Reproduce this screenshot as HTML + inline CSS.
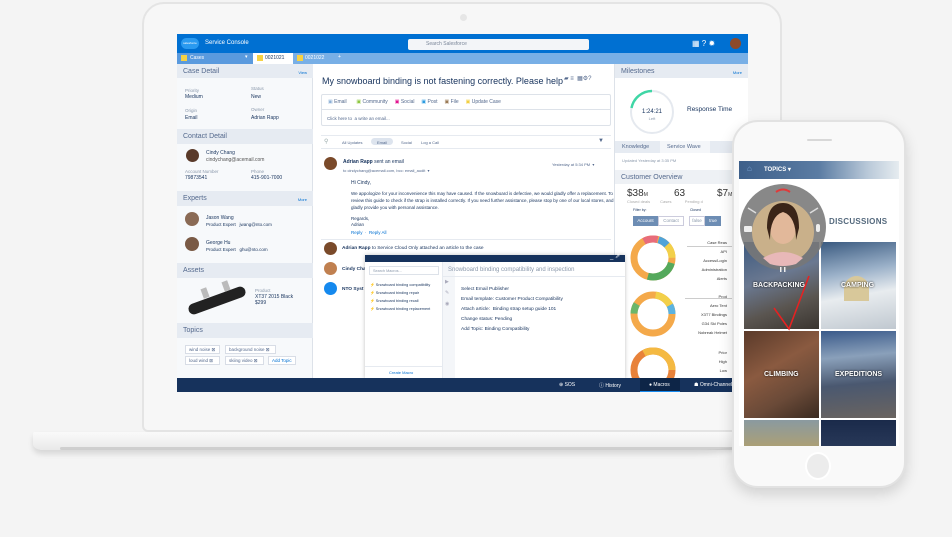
<!DOCTYPE html>
<html><head><meta charset="utf-8"><style>
*{margin:0;padding:0;box-sizing:border-box}
body{width:952px;height:537px;overflow:hidden;background:#f4f4f4;font-family:"Liberation Sans",sans-serif;position:relative;color:#16325c}
.a{position:absolute}
.t{position:absolute;white-space:nowrap}
.hd{position:absolute;background:#e6ebf2;color:#54698d;font-size:7px;padding:4px 6px}
.lbl{color:#8a98ab;font-size:4.5px}
.val{color:#16325c;font-size:5px}
.tag{position:absolute;height:9px;border:1px solid #d8dde6;background:#fff;font-size:4.5px;padding:1px 3px;white-space:nowrap;color:#54698d}
</style></head><body>
<div class="a" style="left:33px;top:432px;width:720px;height:18px;background:linear-gradient(#fafafa,#e9e9e9);border-radius:2px 2px 60px 10px/2px 2px 12px 6px;box-shadow:0 4px 6px rgba(0,0,0,.12)"></div>
<div class="a" style="left:60px;top:447px;width:680px;height:3px;background:#bdbdbd;border-radius:2px;opacity:.6"></div>
<div class="a" style="left:142px;top:2px;width:640px;height:430px;background:#f7f7f7;border:2px solid #e4e4e4;border-radius:22px 22px 6px 6px"></div>
<div class="a" style="left:460px;top:14px;width:7px;height:7px;border-radius:50%;background:#e6e6e6"></div>
<div class="a" style="left:177px;top:34px;width:571px;height:358px;background:#fff;overflow:hidden">
 <div class="a" style="left:0;top:0;width:571px;height:19px;background:#0070d2"></div>
 <div class="a" style="left:4px;top:4px;width:18px;height:11px;border-radius:6px;background:#2a9af0;color:#fff;font-size:3px;text-align:center;line-height:11px">salesforce</div>
 <div class="t" style="left:28px;top:6px;color:#fff;font-size:6px">Service Console</div>
 <div class="a" style="left:231px;top:5px;width:181px;height:11px;background:#f3f5f8;border-radius:2px"></div>
 <div class="t" style="left:249px;top:7px;color:#7a8699;font-size:5px">Search Salesforce</div>
 <div class="t" style="left:515px;top:5px;color:#fff;font-size:8px">▦ ? ✹</div>
 <div class="a" style="left:553px;top:4px;width:11px;height:11px;border-radius:50%;background:#8d4a2a"></div>
 <div class="a" style="left:0;top:19px;width:571px;height:11px;background:#78afe6"></div>
 <div class="a" style="left:0;top:19px;width:76px;height:11px;background:#5a9ade"></div>
 <div class="a" style="left:4px;top:21px;width:6px;height:6px;background:#f6d244"></div>
 <div class="t" style="left:13px;top:21px;color:#fff;font-size:5px">Cases</div>
 <div class="t" style="left:68px;top:20px;color:#fff;font-size:5px">▾</div>
 <div class="a" style="left:76px;top:19px;width:40px;height:11px;background:#fff"></div>
 <div class="a" style="left:80px;top:21px;width:6px;height:6px;background:#f6d244"></div>
 <div class="t" style="left:88px;top:21px;font-size:5px">0021021</div>
 <div class="a" style="left:120px;top:21px;width:6px;height:6px;background:#f6d244"></div>
 <div class="t" style="left:128px;top:21px;color:#fff;font-size:5px">0021022</div>
 <div class="t" style="left:161px;top:20px;color:#fff;font-size:5px">+</div>
 <div class="a" style="left:0;top:30px;width:136px;height:314px;background:#f7f9fb;border-right:1px solid #dde2e9"></div>
 <div class="hd" style="left:0;top:30px;width:136px;height:14px">Case Detail<span style="float:right;font-size:4px;color:#0070d2;margin-top:2px">View</span></div>
 <div class="t lbl" style="left:8px;top:54px">Priority</div><div class="t val" style="left:8px;top:60px">Medium</div>
 <div class="t lbl" style="left:74px;top:52px">Status</div><div class="t val" style="left:74px;top:60px">New</div>
 <div class="t lbl" style="left:8px;top:74px">Origin</div><div class="t val" style="left:8px;top:81px">Email</div>
 <div class="t lbl" style="left:74px;top:73px">Owner</div><div class="t val" style="left:74px;top:81px">Adrian Rapp</div>
 <div class="hd" style="left:0;top:95px;width:136px;height:15px">Contact Detail</div>
 <div class="a" style="left:9px;top:115px;width:13px;height:13px;border-radius:50%;background:#5a3a2a"></div>
 <div class="t val" style="left:29px;top:116px">Cindy Chang</div>
 <div class="t val" style="left:29px;top:123px;color:#555">cindychang@acemail.com</div>
 <div class="t lbl" style="left:8px;top:135px">Account Number</div><div class="t val" style="left:8px;top:141px">79873541</div>
 <div class="t lbl" style="left:74px;top:135px">Phone</div><div class="t val" style="left:74px;top:141px">415-901-7000</div>
 <div class="hd" style="left:0;top:157px;width:136px;height:15px">Experts<span style="float:right;font-size:4px;color:#0070d2;margin-top:2px">More</span></div>
 <div class="a" style="left:8px;top:178px;width:14px;height:14px;border-radius:50%;background:#8a6a55"></div>
 <div class="t val" style="left:29px;top:181px">Jason Wang</div>
 <div class="t val" style="left:29px;top:188px;font-size:4.5px">Product Expert &nbsp;&nbsp;jwang@nto.com</div>
 <div class="a" style="left:8px;top:203px;width:14px;height:14px;border-radius:50%;background:#7a5a45"></div>
 <div class="t val" style="left:29px;top:206px">George Hu</div>
 <div class="t val" style="left:29px;top:213px;font-size:4.5px">Product Expert &nbsp;&nbsp;ghu@nto.com</div>
 <div class="hd" style="left:0;top:229px;width:136px;height:15px">Assets</div>
 <div class="a" style="left:10px;top:261px;width:60px;height:11px;border-radius:6px;background:#222;transform:rotate(-20deg)"></div>
 <div class="a" style="left:25px;top:254px;width:6px;height:10px;background:#bbb;transform:rotate(-20deg)"></div>
 <div class="a" style="left:46px;top:247px;width:6px;height:10px;background:#bbb;transform:rotate(-20deg)"></div>
 <div class="t lbl" style="left:78px;top:254px">Product</div>
 <div class="t val" style="left:78px;top:260px;line-height:6px">XT37 2015 Black<br>$299</div>
 <div class="hd" style="left:0;top:289px;width:136px;height:15px">Topics</div>
 <div class="tag" style="left:8px;top:311px;width:35px">wind noise ⊠</div>
 <div class="tag" style="left:48px;top:311px;width:51px">background noise ⊠</div>
 <div class="tag" style="left:8px;top:322px;width:35px">loud wind ⊠</div>
 <div class="tag" style="left:48px;top:322px;width:39px">skiing video ⊠</div>
 <div class="tag" style="left:91px;top:322px;width:28px;color:#0070d2">Add Topic</div>
 <div class="t" style="left:145px;top:42px;font-size:9px;color:#16325c">My snowboard binding is not fastening correctly. Please help</div>
 <div class="t" style="left:387px;top:41px;font-size:6px;color:#54698d">▰ ≡ &nbsp;▦⚙?</div>
 <div class="a" style="left:144px;top:60px;width:290px;height:32px;border:1px solid #dde2e9;border-radius:2px"></div>
 <div class="a" style="left:144px;top:75px;width:290px;height:1px;background:#dde2e9"></div>
 <div class="t" style="left:151px;top:65px;font-size:5px;color:#54698d"><span style="color:#8db0d6">▣</span> Email &nbsp;&nbsp;&nbsp;&nbsp;&nbsp; <span style="color:#8dc63f">▣</span> Community &nbsp;&nbsp;&nbsp; <span style="color:#e2138f">▣</span> Social &nbsp;&nbsp;&nbsp; <span style="color:#2a9ae0">▣</span> Post &nbsp;&nbsp;&nbsp; <span style="color:#9a7a55">▣</span> File &nbsp;&nbsp;&nbsp; <span style="color:#f2cf40">▣</span> Update Case</div>
 <div class="t" style="left:150px;top:82px;font-size:4.5px;color:#54698d">Click here to &nbsp;a write an email...</div>
 <div class="a" style="left:144px;top:101px;width:290px;height:1px;background:#e6eaf0"></div>
 <div class="t" style="left:147px;top:104px;font-size:6px;color:#9aa">⚲</div>
 <div class="t" style="left:165px;top:106px;font-size:4px;color:#54698d">All Updates</div>
 <div class="a" style="left:194px;top:104px;width:22px;height:7px;border-radius:4px;background:#dde4ee"></div>
 <div class="t" style="left:200px;top:106px;font-size:4px;color:#54698d">Email</div>
 <div class="t" style="left:224px;top:106px;font-size:4px;color:#54698d">Social</div>
 <div class="t" style="left:244px;top:106px;font-size:4px;color:#54698d">Log a Call</div>
 <div class="t" style="left:421px;top:104px;font-size:6px;color:#54698d">▼</div>
 <div class="a" style="left:144px;top:114px;width:290px;height:1px;background:#e6eaf0"></div>
 <div class="a" style="left:147px;top:123px;width:13px;height:13px;border-radius:50%;background:#7a4a2a"></div>
 <div class="t" style="left:166px;top:125px;font-size:5px"><b>Adrian Rapp</b> sent an email</div>
 <div class="t" style="left:166px;top:134px;font-size:4px;color:#54698d">to cindychang@acemail.com, bcc: email_audit &nbsp;▾</div>
 <div class="t" style="left:375px;top:128px;font-size:4px;color:#54698d">Yesterday at 5:34 PM &nbsp;▾</div>
 <div class="t" style="left:174px;top:146px;font-size:5px">Hi Cindy,</div>
 <div class="t" style="left:174px;top:156px;font-size:4.5px;line-height:7px">We appologize for your inconvenience this may have caused. If the snowboard is defective, we would gladly offer a replacement. To view<br>review this guide to check if the strap is installed correctly. If you need further assistance, please stop by one of our local stores, and a<br>gladly provide you with personal assistance.</div>
 <div class="t" style="left:174px;top:182px;font-size:4.5px;line-height:6px">Regards,<br>Adrian</div>
 <div class="t" style="left:174px;top:196px;font-size:4.5px;color:#0070d2">Reply &nbsp;· &nbsp;Reply All</div>
 <div class="a" style="left:144px;top:205px;width:290px;height:1px;background:#e6eaf0"></div>
 <div class="a" style="left:147px;top:208px;width:13px;height:13px;border-radius:50%;background:#7a4a2a"></div>
 <div class="t" style="left:165px;top:212px;font-size:4.8px"><b>Adrian Rapp</b> to Service Cloud Only attached an article to the case</div>
 <div class="a" style="left:147px;top:228px;width:13px;height:13px;border-radius:50%;background:#c08050"></div>
 <div class="t" style="left:165px;top:233px;font-size:4.8px"><b>Cindy Cha</b></div>
 <div class="a" style="left:147px;top:248px;width:13px;height:13px;border-radius:50%;background:#1589ee"></div>
 <div class="t" style="left:165px;top:253px;font-size:4.8px"><b>NTO Syst</b></div>
 <div class="a" style="left:437px;top:30px;width:134px;height:314px;background:#fff;border-left:1px solid #dde2e9"></div>
 <div class="hd" style="left:438px;top:30px;width:133px;height:14px">Milestones<span style="float:right;font-size:4px;color:#0070d2;margin-top:2px">More</span></div>
 <svg class="a" style="left:451px;top:54px" width="48" height="48"><circle cx="24" cy="24" r="21" fill="none" stroke="#e5e9ef" stroke-width="2"/><path d="M24 3 A21 21 0 0 0 3.5 20" fill="none" stroke="#3fd6a5" stroke-width="2.5"/><text x="24" y="25" font-size="6" text-anchor="middle" fill="#16325c" font-family="Liberation Sans">1:24:21</text><text x="24" y="32" font-size="4" text-anchor="middle" fill="#8a98ab" font-family="Liberation Sans">Left</text></svg>
 <div class="t" style="left:510px;top:72px;font-size:6.5px;color:#16325c">Response Time</div>
 <div class="a" style="left:438px;top:107px;width:133px;height:12px;background:#e6ebf2"></div>
 <div class="a" style="left:483px;top:107px;width:50px;height:12px;background:#f4f6f9"></div>
 <div class="t" style="left:445px;top:110px;font-size:5.5px;color:#54698d">Knowledge</div>
 <div class="t" style="left:490px;top:110px;font-size:5.5px;color:#54698d">Service Wave</div>
 <div class="t" style="left:445px;top:124px;font-size:4px;color:#8a98ab">Updated Yesterday at 3:35 PM</div>
 <div class="hd" style="left:438px;top:136px;width:133px;height:14px;background:#eef1f5;font-size:7px">Customer Overview</div>
 <div class="t" style="left:450px;top:154px;font-size:10px;color:#333">$38<span style="font-size:5px">M</span></div>
 <div class="t" style="left:497px;top:154px;font-size:10px;color:#333">63</div>
 <div class="t" style="left:540px;top:154px;font-size:10px;color:#333">$7<span style="font-size:5px">M</span></div>
 <div class="t" style="left:450px;top:165px;font-size:4px;color:#aaa">Closed deals &nbsp;&nbsp;&nbsp;&nbsp;&nbsp;&nbsp;&nbsp; Cases &nbsp;&nbsp;&nbsp;&nbsp;&nbsp;&nbsp;&nbsp;&nbsp;&nbsp;&nbsp; Pending d</div>
 <div class="t" style="left:456px;top:174px;font-size:3.5px">Filter by:</div>
 <div class="t" style="left:513px;top:174px;font-size:3.5px">Closed</div>
 <div class="a" style="left:456px;top:182px;width:25px;height:10px;background:#6d8db4;color:#fff;font-size:4.5px;text-align:center;line-height:10px">Account</div>
 <div class="a" style="left:481px;top:182px;width:26px;height:10px;border:1px solid #ccd;color:#8a98ab;font-size:4.5px;text-align:center;line-height:8px">Contact</div>
 <div class="a" style="left:512px;top:182px;width:16px;height:10px;border:1px solid #ccd;color:#8a98ab;font-size:4.5px;text-align:center;line-height:8px">false</div>
 <div class="a" style="left:528px;top:182px;width:16px;height:10px;background:#6d8db4;color:#fff;font-size:4.5px;text-align:center;line-height:10px">true</div>
 <svg class="a" style="left:452px;top:200px" width="50" height="150">
  <g fill="none" stroke-width="7">
   <circle cx="24" cy="24" r="19" stroke="#f4a94a"/>
   <circle cx="24" cy="24" r="19" stroke="#54a95c" stroke-dasharray="30 200" stroke-dashoffset="-5"/>
   <circle cx="24" cy="24" r="19" stroke="#e86c7a" stroke-dasharray="14 200" stroke-dashoffset="-80"/>
   <circle cx="24" cy="24" r="19" stroke="#4fa3d9" stroke-dasharray="10 200" stroke-dashoffset="-95"/>
   <circle cx="24" cy="24" r="19" stroke="#f2d04a" stroke-dasharray="14 200" stroke-dashoffset="-105"/>
   <circle cx="24" cy="80" r="19" stroke="#f4a94a"/>
   <circle cx="24" cy="80" r="19" stroke="#5cb3e0" stroke-dasharray="15 200" stroke-dashoffset="-110"/>
   <circle cx="24" cy="80" r="19" stroke="#f2d04a" stroke-dasharray="18 200" stroke-dashoffset="-92"/>
   <circle cx="24" cy="80" r="19" stroke="#6ab66a" stroke-dasharray="10 200" stroke-dashoffset="-60"/>
   <circle cx="24" cy="136" r="19" stroke="#e8823a"/>
   <circle cx="24" cy="136" r="19" stroke="#f4b942" stroke-dasharray="40 200" stroke-dashoffset="-80"/>
  </g></svg>
 <div class="t" style="left:506px;top:204px;font-size:4px;color:#333;text-align:right;line-height:9px;width:44px">Case Reas<br>API<br>Access/Login<br>Administration<br>Alerts</div>
 <div class="a" style="left:510px;top:212px;width:61px;height:1px;background:#ccc"></div>
 <div class="t" style="left:506px;top:258px;font-size:4px;color:#333;text-align:right;line-height:9px;width:44px">Prod<br>Aero Tent<br>X3T7 Bindings<br>G34 Ski Poles<br>Nobreak Helmet</div>
 <div class="a" style="left:508px;top:264px;width:63px;height:1px;background:#ccc"></div>
 <div class="t" style="left:506px;top:314px;font-size:4px;color:#333;text-align:right;line-height:9px;width:44px">Prior<br>High<br>Low</div>
 <div class="a" style="left:188px;top:221px;width:260px;height:124px;background:#fff;box-shadow:0 0 4px rgba(0,0,0,.25)"></div>
 <div class="a" style="left:188px;top:221px;width:260px;height:7px;background:#16325c"></div>
 <div class="t" style="left:433px;top:219px;font-size:6px;color:#fff">_ ⇗</div>
 <div class="a" style="left:188px;top:228px;width:78px;height:117px;background:#fff;border-right:1px solid #e6eaf0"></div>
 <div class="a" style="left:192px;top:232px;width:70px;height:9px;border:1px solid #dde2e9;font-size:3.8px;color:#8a98ab;padding:2px 3px">Search Macros...</div>
 <div class="t" style="left:193px;top:247px;font-size:3.8px;color:#16325c;line-height:8px">⚡ Snowboard binding compatibility<br>⚡ Snowboard binding repair<br>⚡ Snowboard binding recall<br>⚡ Snowboard binding replacement</div>
 <div class="a" style="left:188px;top:332px;width:78px;height:1px;background:#e6eaf0"></div>
 <div class="t" style="left:212px;top:336px;font-size:4px;color:#0070d2">Create Macro</div>
 <div class="a" style="left:266px;top:228px;width:12px;height:117px;background:#f4f6f9"></div>
 <div class="t" style="left:268px;top:243px;font-size:5px;color:#aab;line-height:11px">▶<br>✎<br>◉</div>
 <div class="t" style="left:271px;top:233px;font-size:6px;color:#8a98ab">Snowboard binding compatibility and inspection</div>
 <div class="a" style="left:266px;top:242px;width:182px;height:1px;background:#e6eaf0"></div>
 <div class="t" style="left:284px;top:251px;font-size:4.8px;color:#16325c;line-height:10px">Select Email Publisher<br>Email template: Customer Product Compatibility<br>Attach article: &nbsp;Binding strap setup guide 101<br>Change status: Pending<br>Add Topic: Binding Compatibility</div>
 <div class="a" style="left:0;top:344px;width:571px;height:14px;background:#16325c"></div>
 <div class="a" style="left:463px;top:344px;width:40px;height:14px;background:#0d2547;border-bottom:1px solid #1589ee"></div>
 <div class="t" style="left:382px;top:348px;font-size:5px;color:#fff">⊕ SOS</div>
 <div class="t" style="left:422px;top:348px;font-size:5px;color:#fff">ⓘ History</div>
 <div class="t" style="left:472px;top:348px;font-size:5px;color:#fff">● Macros</div>
 <div class="t" style="left:517px;top:348px;font-size:5px;color:#fff">☗ Omni-Channel</div>
</div>
<div class="a" style="left:732px;top:120px;width:174px;height:368px;background:#f9f9f9;border:2px solid #e2e2e2;border-radius:26px;box-shadow:0 6px 14px rgba(0,0,0,.15)"></div>
<div class="a" style="left:807px;top:139px;width:25px;height:2px;border-radius:1px;background:#d8d8d8"></div>
<div class="a" style="left:805px;top:452px;width:26px;height:28px;border-radius:50%;border:2px solid #fff;background:#ececec"></div>
<div class="a" style="left:739px;top:161px;width:160px;height:285px;background:#fff;overflow:hidden">
 <div class="a" style="left:0;top:0;width:160px;height:18px;background:linear-gradient(90deg,#3d5f8a,#5b7ca3 50%,#b8c8d8 80%,#e6ecf0)"></div>
 <div class="t" style="left:8px;top:3px;color:#7ea6d8;font-size:8px">⌂</div>
 <div class="t" style="left:25px;top:5px;color:#fff;font-size:6px;font-weight:bold">TOPICS ▾</div>
 <div class="t" style="left:90px;top:56px;color:#54697d;font-size:8px;font-weight:bold;letter-spacing:.3px">DISCUSSIONS</div>
 <div class="a" style="left:5px;top:81px;width:75px;height:87px;background:linear-gradient(160deg,#3d5a80,#6a7890 40%,#5a5550 70%,#3a3530)"></div>
 <div class="a" style="left:82px;top:81px;width:75px;height:87px;background:linear-gradient(170deg,#3a5a80,#9ab0c8 35%,#e8ecef 60%,#c0c8d0)"></div>
 <div class="a" style="left:105px;top:115px;width:25px;height:25px;background:#d8c89a;border-radius:50% 50% 0 0"></div>
 <div class="a" style="left:5px;top:170px;width:75px;height:87px;background:linear-gradient(150deg,#5a3a2a,#8a5a40 40%,#6a4a38 70%,#3a2a20)"></div>
 <div class="a" style="left:82px;top:170px;width:75px;height:87px;background:linear-gradient(175deg,#3a5a8a,#8aa0ba 30%,#4a5870 60%,#6a6460)"></div>
 <div class="a" style="left:5px;top:259px;width:75px;height:30px;background:linear-gradient(#8a9aa0,#b0a070)"></div>
 <div class="a" style="left:82px;top:259px;width:75px;height:30px;background:linear-gradient(#1a2a4a,#2a3a5a)"></div>
 <div class="t" style="left:14px;top:121px;color:#fff;font-size:7px;font-weight:bold;text-shadow:0 0 2px #000">BACKPACKING</div>
 <div class="t" style="left:102px;top:121px;color:#fff;font-size:7px;font-weight:bold;text-shadow:0 0 2px #000">CAMPING</div>
 <div class="t" style="left:25px;top:210px;color:#fff;font-size:7px;font-weight:bold;text-shadow:0 0 2px #000">CLIMBING</div>
 <div class="t" style="left:96px;top:210px;color:#fff;font-size:7px;font-weight:bold;text-shadow:0 0 2px #000">EXPEDITIONS</div>
 <svg class="a" style="left:0;top:0" width="160" height="285"><path d="M35 147 L50 168 L70 115" fill="none" stroke="#e52222" stroke-width="1.6"/></svg>
</div>
<svg class="a" style="left:736px;top:180px" width="96" height="96">
 <circle cx="47" cy="47" r="43" fill="#777" opacity=".88"/>
 <circle cx="47" cy="52" r="31" fill="#c9b08a"/>
 <ellipse cx="47" cy="48" rx="13" ry="16" fill="#e2b89a"/>
 <path d="M31 48 Q31 23 47 23 Q63 23 63 48 L60 60 Q60 36 47 32 Q34 36 34 60 Z" fill="#3a2418"/>
 <path d="M27 78 Q47 66 67 78 L60 84 Q47 88 34 84 Z" fill="#e8b8b8"/>
 <path d="M40 12 Q47 7 54 12" fill="none" stroke="#e03a3a" stroke-width="2"/>
 <path d="M12 28 L20 33 M82 28 L74 33" stroke="#ddd" stroke-width="1.5"/>
 <rect x="8" y="46" width="8" height="6" rx="1" fill="#eee"/>
 <rect x="80" y="44" width="4" height="8" rx="2" fill="#eee"/>
 <rect x="44" y="87" width="1.5" height="5" fill="#eee"/><rect x="48" y="87" width="1.5" height="5" fill="#eee"/>
</svg>
</body></html>
